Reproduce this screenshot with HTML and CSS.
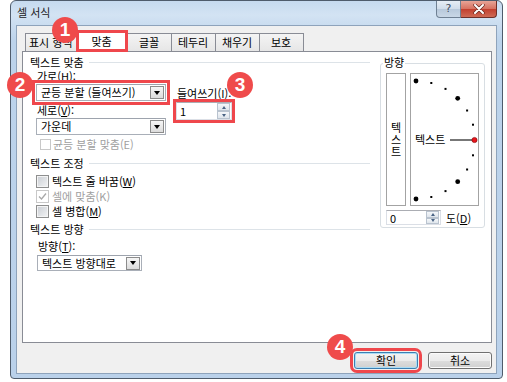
FILE: index.html
```html
<!DOCTYPE html>
<html lang="ko">
<head>
<meta charset="UTF-8">
<meta name="viewport" content="width=device-width, initial-scale=1.0">
<title>셀 서식</title>
<link rel="stylesheet" href="styles.css">
</head>
<body>
<div class="window">
    <div class="titlebar">
        <span class="title">셀 서식</span>
        <div class="caption">
            <span class="cap-help">?</span>
            <span class="cap-close">
                <svg width="12" height="10" viewBox="0 0 12 10">
                    <path d="M2 1 L10 9 M10 1 L2 9" stroke="#6b2a22" stroke-width="3.4" stroke-linecap="round"/>
                    <path d="M2 1 L10 9 M10 1 L2 9" stroke="#fff" stroke-width="2" stroke-linecap="round"/>
                </svg>
            </span>
        </div>
    </div>

    <div class="client">
        <div class="tabs">
            <span class="tab">표시 형식</span>
            <span class="tab selected">맞춤</span>
            <span class="tab">글꼴</span>
            <span class="tab">테두리</span>
            <span class="tab">채우기</span>
            <span class="tab">보호</span>
        </div>

        <div class="panel">
            <div class="main-col">
                <div class="group-title">텍스트 맞춤</div>
                <div class="align-row">
                    <div class="align-stack">
                        <div class="label">가로(H):</div>
                        <div class="combo marked">
                            <span class="combo-text">균등 분할 (들여쓰기)</span>
                            <span class="combo-arrow"></span>
                        </div>
                        <div class="label label-gap">세로(<u>V</u>):</div>
                        <div class="combo">
                            <span class="combo-text">가운데</span>
                            <span class="combo-arrow"></span>
                        </div>
                    </div>
                    <div class="indent-stack">
                        <div class="label">들여쓰기(<u>I</u>):</div>
                        <div class="spin spin-indent marked-tight">
                            <span class="spin-value">1</span>
                            <span class="spin-btns"><span class="spin-up"></span><span class="spin-down"></span></span>
                        </div>
                    </div>
                </div>
                <div class="check-row disabled justify-row">
                    <span class="check check-small"></span><span>균등 분할 맞춤(E)</span>
                </div>

                <div class="group-title group-gap">텍스트 조정</div>
                <div class="check-list">
                    <div class="check-row"><span class="check"></span><span>텍스트 줄 바꿈(<u>W</u>)</span></div>
                    <div class="check-row disabled">
                        <span class="check checked">
                            <svg width="11" height="11" viewBox="0 0 11 11"><path d="M2 5.5 L4.5 8 L9 2.5" fill="none" stroke="#a8a8a8" stroke-width="1.3"/></svg>
                        </span><span>셀에 맞춤(K)</span>
                    </div>
                    <div class="check-row"><span class="check"></span><span>셀 병합(<u>M</u>)</span></div>
                </div>

                <div class="group-title group-gap-small">텍스트 방향</div>
                <div class="label label-dir">방향(<u>T</u>):</div>
                <div class="combo combo-dir">
                    <span class="combo-text">텍스트 방향대로</span>
                    <span class="combo-arrow"></span>
                </div>
            </div>

            <div class="orient">
                <div class="orient-title">방향</div>
                <div class="orient-boxes">
                    <div class="vtext"><span>텍스트</span></div>
                    <div class="dial">
                        <svg width="67" height="131" viewBox="0 0 67 131">
                            <circle cx="5" cy="7" r="2.4"/>
                            <rect x="19.3" y="8" width="2" height="2"/>
                            <rect x="33.5" y="13.9" width="2" height="2"/>
                            <circle cx="46.7" cy="24.3" r="2.4"/>
                            <rect x="55.1" y="35.5" width="2" height="2"/>
                            <rect x="61" y="49.7" width="2" height="2"/>
                            <rect x="61" y="80.3" width="2" height="2"/>
                            <rect x="55.1" y="94.5" width="2" height="2"/>
                            <circle cx="46.7" cy="107.7" r="2.4"/>
                            <rect x="33.5" y="116.1" width="2" height="2"/>
                            <rect x="19.3" y="122" width="2" height="2"/>
                            <circle cx="5" cy="125" r="2.4"/>
                            <line x1="39" y1="66" x2="62" y2="66" stroke="#555" stroke-width="1.6"/>
                            <circle cx="63.5" cy="66" r="2.6" fill="#e8141c" stroke="#7a0a0a" stroke-width="0.6"/>
                            <text class="dial-text" x="4" y="70">텍스트</text>
                        </svg>
                    </div>
                </div>
                <div class="degree-row">
                    <div class="spin spin-degree">
                        <span class="spin-value">0</span>
                        <span class="spin-btns"><span class="spin-up"></span><span class="spin-down"></span></span>
                    </div>
                    <span class="degree-label">도(<u>D</u>)</span>
                </div>
            </div>
        </div>

        <div class="buttons">
            <span class="button default marked">확인</span>
            <span class="button">취소</span>
        </div>
    </div>
</div>

<!-- numbered callouts -->
<span class="badge badge-1">1</span>
<span class="badge badge-2">2</span>
<span class="badge badge-3">3</span>
<span class="badge badge-4">4</span>
</body>
</html>
```

FILE: styles.css
```css
body {
    margin: 0;
    position: relative;
    background: #fff;
    font-family: "Noto Sans CJK KR", "Noto Sans", sans-serif;
    font-size: 11px;
    color: #000;
}
u {
    text-underline-offset: 1px;
}

/* window frame */
.window {
    margin-left: 10px;
    width: 493px;
    height: 379px;
    box-sizing: border-box;
    border: 1px solid #4f5c6c;
    border-radius: 6px 6px 4px 4px;
    background: linear-gradient(#c6daef, #d3e3f3 14px, #bcd3eb 40px, #bad1ea);
    padding: 0 5px 4px 5px;
    display: flex;
    flex-direction: column;
}
.titlebar {
    height: 24px;
    flex-shrink: 0;
    display: flex;
    justify-content: space-between;
    align-items: flex-start;
}
.title {
    margin: 4px 0 0 1px;
    line-height: 15px;
    color: #1a1a1a;
}
.caption {
    display: flex;
}
.cap-help {
    width: 25px;
    height: 17px;
    box-sizing: border-box;
    border: 1px solid #6f8093;
    border-top: none;
    border-radius: 0 0 0 4px;
    background: linear-gradient(#e6edf5, #d0dcea 50%, #b7c8db 51%, #c9d7e6);
    color: #3e4c5e;
    text-align: center;
    line-height: 16px;
    font-family: "DejaVu Sans", sans-serif;
    font-size: 11px;
}
.cap-close {
    width: 36px;
    height: 17px;
    box-sizing: border-box;
    border: 1px solid #6e2f28;
    border-left: none;
    border-top: none;
    border-radius: 0 0 4px 0;
    background: linear-gradient(#e7a497, #d6705f 50%, #c23f2e 51%, #cf6a55);
    display: flex;
    align-items: center;
    justify-content: center;
}

.client {
    flex: 1;
    border: 1px solid #8ea3bb;
    background: #f0f0f0;
    padding: 4px 4px 0 5px;
    display: flex;
    flex-direction: column;
}

/* tabs */
.tabs {
    height: 21px;
    display: flex;
    align-items: flex-end;
    padding-left: 3px;
}
.tab {
    height: 18px;
    min-width: 45px;
    box-sizing: border-box;
    padding: 0 3px;
    border: 1px solid #898c95;
    border-bottom: none;
    margin-left: -1px;
    background: linear-gradient(#f4f4f4, #e6e6e6);
    text-align: center;
    line-height: 17px;
}
.tab:first-child {
    margin-left: 0;
}
.tab.selected {
    position: relative;
    z-index: 1;
    height: 22px;
    width: 52px;
    margin-bottom: -1px;
    line-height: 21px;
    background: #fff;
    outline: 3px solid #ef474c;
    outline-offset: -3px;
}

/* main panel */
.panel {
    height: 292px;
    flex-shrink: 0;
    box-sizing: border-box;
    border: 1px solid #898c95;
    background: #fff;
    padding: 3px 6px 0 7px;
    display: flex;
    gap: 7px;
}
.main-col {
    flex: 1;
    display: flex;
    flex-direction: column;
}
.group-title {
    display: flex;
    align-items: center;
    line-height: 14px;
}
.group-title::after {
    content: "";
    flex: 1;
    height: 1px;
    margin: 1px 3px 0 5px;
    background: #dde3e8;
}
.group-gap {
    margin-top: 5px;
}
.group-gap-small {
    margin-top: 3px;
}
.label {
    line-height: 14px;
    padding-left: 1px;
}
.label-gap {
    margin-top: 2px;
}
.label-dir {
    margin: 3px 0 0 7px;
}

.align-row {
    display: flex;
    padding-left: 6px;
}
.align-stack {
    width: 130px;
    display: flex;
    flex-direction: column;
}
.indent-stack {
    margin: 17px 0 0 10px;
    display: flex;
    flex-direction: column;
}

/* combo boxes */
.combo {
    height: 17px;
    margin-top: 1px;
    box-sizing: border-box;
    border: 1px solid #a9afb8;
    border-top-color: #9da3ad;
    background: #fff;
    display: flex;
    align-items: center;
    padding-left: 4px;
}
.combo-text {
    flex: 1;
    line-height: 15px;
    white-space: nowrap;
}
.combo-arrow {
    width: 14px;
    height: 13px;
    margin-right: 1px;
    box-sizing: border-box;
    border: 1px solid #8c8c8c;
    background: linear-gradient(#f6f6f6, #dcdcdc);
    display: flex;
    align-items: center;
    justify-content: center;
}
.combo-arrow::after {
    content: "";
    border-left: 3px solid transparent;
    border-right: 3px solid transparent;
    border-top: 4px solid #000;
}
.combo-dir {
    width: 105px;
    margin: 2px 0 0 7px;
    height: 16px;
}
.marked {
    outline: 3px solid #ef474c;
    outline-offset: 1px;
}
.marked-tight {
    outline: 3px solid #ef474c;
    outline-offset: 0;
}

/* spinners */
.spin {
    box-sizing: border-box;
    border: 1px solid #dbdfe6;
    border-top-color: #abadb3;
    background: #fff;
    display: flex;
}
.spin-indent {
    width: 56px;
    height: 18px;
    margin-top: 2px;
}
.spin-degree {
    width: 55px;
    height: 15px;
}
.spin-value {
    flex: 1;
    padding-left: 3px;
    line-height: 14px;
}
.spin-indent .spin-value {
    line-height: 16px;
}
.spin-btns {
    width: 13px;
    margin: 0 1px 0 0;
    display: flex;
    flex-direction: column;
}
.spin-btns span {
    flex: 1;
    box-sizing: border-box;
    border: 1px solid #b9c3cf;
    background: linear-gradient(#f5f7fa, #dfe5ec);
    display: flex;
    align-items: center;
    justify-content: center;
}
.spin-up::after {
    content: "";
    border-left: 2.5px solid transparent;
    border-right: 2.5px solid transparent;
    border-bottom: 3px solid #4a6384;
}
.spin-down::after {
    content: "";
    border-left: 2.5px solid transparent;
    border-right: 2.5px solid transparent;
    border-top: 3px solid #4a6384;
}

/* check boxes */
.check-row {
    display: flex;
    align-items: center;
    gap: 3px;
    line-height: 15px;
}
.check-list {
    margin-top: 4px;
    padding-left: 6px;
}
.justify-row {
    margin-top: 2px;
    padding-left: 10px;
    gap: 2px;
    line-height: 14px;
}
.check {
    width: 13px;
    height: 13px;
    flex-shrink: 0;
    box-sizing: border-box;
    border: 1px solid #8e8f8f;
    background: linear-gradient(135deg, #c9cdd3, #f3f4f5);
    box-shadow: inset 0 0 0 1px #f4f4f4;
    display: flex;
    align-items: center;
    justify-content: center;
}
.check-small {
    width: 11px;
    height: 11px;
}
.disabled {
    color: #a0a0a0;
}
.disabled .check {
    border-color: #c8c8c8;
    background: #fff;
    box-shadow: none;
}

/* orientation group */
.orient {
    width: 105px;
    align-self: flex-start;
    box-sizing: border-box;
    margin-top: 8px;
    border: 1px solid #d8dee3;
    border-radius: 3px;
    padding: 0 5px 2px;
    display: flex;
    flex-direction: column;
}
.orient-title {
    align-self: flex-start;
    margin: -9px 0 0 -3px;
    padding: 0 1px;
    background: #fff;
    line-height: 14px;
}
.orient-boxes {
    margin-top: 4px;
    display: flex;
    gap: 4px;
}
.vtext {
    width: 20px;
    height: 133px;
    box-sizing: border-box;
    border: 1px solid #a3a3a3;
    display: flex;
    align-items: center;
    justify-content: center;
}
.vtext span {
    writing-mode: vertical-rl;
    letter-spacing: 1px;
    line-height: 12px;
}
.dial {
    width: 69px;
    height: 133px;
    box-sizing: border-box;
    border: 1px solid #a3a3a3;
}
.dial svg {
    display: block;
}
.dial-text {
    font-family: "Noto Sans CJK KR", sans-serif;
    font-size: 11px;
}
.degree-row {
    margin-top: 4px;
    display: flex;
    align-items: center;
    gap: 5px;
}
.degree-label {
    line-height: 14px;
}

/* dialog buttons */
.buttons {
    margin-top: 9px;
    display: flex;
    justify-content: flex-end;
    gap: 10px;
}
.button {
    width: 64px;
    height: 17px;
    box-sizing: border-box;
    border: 1px solid #707070;
    border-radius: 3px;
    background: linear-gradient(#f3f3f3, #ebebeb 50%, #dddddd 51%, #d0d0d0);
    box-shadow: inset 0 0 0 1px #fbfbfb;
    text-align: center;
    line-height: 15px;
}
.button.default {
    border-color: #3c7fb1;
    box-shadow: inset 0 0 0 1px #a9dcf6;
}

/* numbered callouts */
.badge {
    position: absolute;
    width: 26px;
    height: 26px;
    border-radius: 50%;
    background: #ef4b4b;
    color: #fff;
    font-family: "Liberation Sans", Arial, sans-serif;
    font-weight: bold;
    font-size: 19px;
    display: flex;
    align-items: center;
    justify-content: center;
    z-index: 5;
}
.badge-1 { left: 52px; top: 17px; }
.badge-2 { left: 7px; top: 72px; }
.badge-3 { left: 227px; top: 72px; }
.badge-4 { left: 327px; top: 334px; }
```
